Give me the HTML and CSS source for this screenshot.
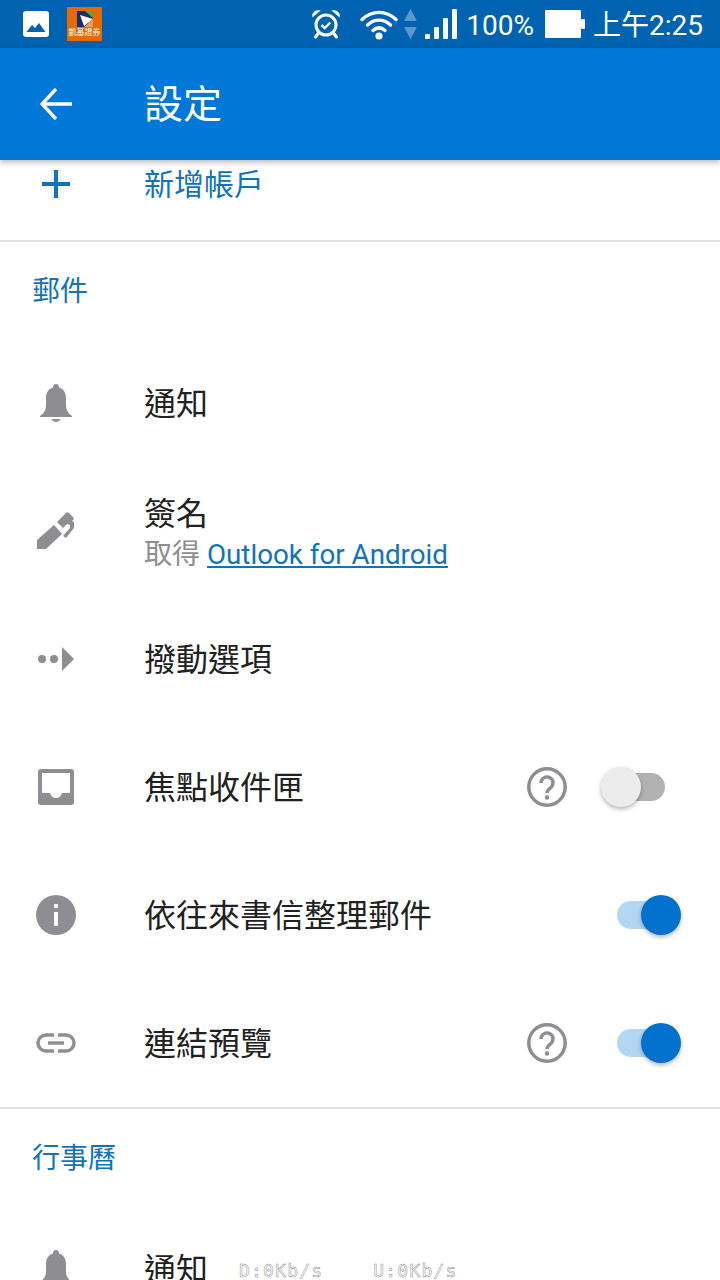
FILE: index.html
```html
<!DOCTYPE html>
<html lang="zh-Hant">
<head>
<meta charset="utf-8">
<title>設定</title>
<link rel="stylesheet" href="styles.css">
</head>
<body>
<div class="screen">
  <header class="statusbar">
    <svg class="st-image" viewBox="0 0 26 26"><rect width="26" height="26" rx="3" fill="#fff"/><path d="M3.500 21l5.500-7 3 3 4-5 6.500 9z" fill="#0063b1"/></svg>
    <div class="st-logo">
      <svg class="st-logo-mark" viewBox="0 0 16 16"><rect width="16" height="16" fill="#1d2c6b"/><path d="M8 0h8v7z" fill="#5aa63c"/><path d="M3 4l13 4-9 7z" fill="#fff"/><path d="M16 8v8H7z" fill="#f0a040"/></svg>
      <span class="st-logo-text">凱基證券</span>
    </div>
    <div class="st-right">
      <svg class="st-alarm" viewBox="0 0 30 30" fill="none" stroke="#fff"><circle cx="15" cy="16" r="10" stroke-width="3"/><path d="M10.500 16l3.200 3 5.500-5.500" stroke-width="2.400"/><path d="M2 7a5 5 0 0 1 6-5zM28 7a5 5 0 0 0-6-5z" fill="#fff" stroke-width="1.500"/><path d="M7.500 24l-3 4M22.500 24l3 4" stroke-width="3" stroke-linecap="round"/></svg>
      <svg class="st-wifi" viewBox="0 0 38 32" fill="none" stroke="#fff" stroke-width="3.400" stroke-linecap="round"><path d="M2 11.500c10-9.500 24-9.500 34 0"/><path d="M7.500 17c7-6.500 16-6.500 23 0"/><path d="M13 22.500c4-3.500 8-3.500 12 0"/><circle cx="19" cy="28" r="3.600" fill="#fff" stroke="none"/></svg>
      <svg class="st-arrows" viewBox="0 0 13 32" fill="#5b96cc"><path d="M6.500 1L13 13H0zM0 19h13L6.500 31z"/></svg>
      <svg class="st-signal" viewBox="0 0 32 30" fill="#fff"><rect x="0" y="25" width="5" height="5" rx="1"/><rect x="9" y="18" width="5" height="12" rx="1"/><rect x="18" y="9" width="5" height="21" rx="1"/><rect x="27" y="0" width="5" height="30" rx="1"/></svg>
      <span class="st-percent">100%</span>
      <svg class="st-battery" viewBox="0 0 40 28" fill="#fff"><rect width="36" height="28" rx="1"/><rect x="36" y="9" width="4" height="10" rx="1"/></svg>
      <span class="st-time">上午2:25</span>
    </div>
  </header>

  <div class="appbar">
    <svg class="appbar-back" viewBox="0 0 32 32" fill="none" stroke="#fff" stroke-width="3.400"><path d="M32 16H3M16 1L2 16l14 15"/></svg>
    <h1 class="appbar-title">設定</h1>
  </div>

  <main class="content">
    <div class="add-row">
      <div class="icon-slot"><svg class="icon-plus" viewBox="0 0 28 28" fill="#1173bb"><rect x="12" y="0" width="4" height="28"/><rect x="0" y="12" width="28" height="4"/></svg></div>
      <span class="add-label">新增帳戶</span>
    </div>
    <div class="divider"></div>

    <div class="section-head section-first">郵件</div>

    <div class="row">
      <div class="icon-slot"><svg class="icon-bell" viewBox="0 0 32 38" fill="#8e8e92"><path d="M16 0c2 0 3 1.500 3 3.500 5 1.500 7 5.500 7 11V22c0 4 2 7 6 10v1H0v-1c4-3 6-6 6-10v-7.500c0-5.500 2-9.500 7-11C13 1.500 14 0 16 0z"/><path d="M11.500 35h9c-.7 2-2.500 3-4.500 3s-3.800-1-4.500-3z"/></svg></div>
      <span class="row-label">通知</span>
    </div>

    <div class="row">
      <div class="icon-slot"><svg class="icon-pen" viewBox="0 0 38 38" fill="#8e8e92"><path d="M0 37V28L17 13l8 9L9 37z"/><path d="M20 10l9-9c1-1 2-1 3 0l4 4c1 1 1 2 0 3l-1 1 2 1v6l-8 10-3-2 7-8v-3l-3-1-4 4z"/></svg></div>
      <div class="row-stack">
        <span class="row-label">簽名</span>
        <span class="row-sub">取得 <a class="row-link">Outlook for Android</a></span>
      </div>
    </div>

    <div class="row">
      <div class="icon-slot"><svg class="icon-swipe" viewBox="0 0 36 24" fill="#8e8e92"><circle cx="4" cy="12" r="4"/><circle cx="16" cy="12" r="4"/><path d="M24 0l12 12-12 12z"/></svg></div>
      <span class="row-label">撥動選項</span>
    </div>

    <div class="row">
      <div class="icon-slot"><svg class="icon-inbox" viewBox="0 0 36 36"><rect width="36" height="36" rx="3" fill="#8e8e92"/><path d="M4 4h28v20h-8c-1 3.500-3 5-6 5s-5-1.500-6-5H4z" fill="#fff"/></svg></div>
      <span class="row-label">焦點收件匣</span>
      <svg class="icon-help" viewBox="0 0 40 40" fill="none" stroke="#8e8e92"><circle cx="20" cy="20" r="18.200" stroke-width="3.500"/><path d="M14 16a6 6 0 1 1 9.500 4.800c-2.300 1.700-3.500 2.700-3.500 5.200" stroke-width="3.400"/><circle cx="20" cy="30.500" r="2.200" fill="#8e8e92" stroke="none"/></svg>
      <span class="switch switch-off"><span class="switch-thumb"></span></span>
    </div>

    <div class="row">
      <div class="icon-slot"><svg class="icon-info" viewBox="0 0 40 40"><circle cx="20" cy="20" r="20" fill="#8e8e92"/><rect x="18" y="9" width="4" height="4" fill="#fff"/><rect x="18" y="17" width="4" height="14" fill="#fff"/></svg></div>
      <span class="row-label">依往來書信整理郵件</span>
      <span class="switch switch-on switch-alone"><span class="switch-thumb"></span></span>
    </div>

    <div class="row">
      <div class="icon-slot"><svg class="icon-link" viewBox="0 0 40 20" fill="none" stroke="#8e8e92" stroke-width="3.400"><path d="M18 2H10a8 8 0 0 0 0 16h8M22 2h8a8 8 0 0 1 0 16h-8"/><path d="M12 10h16"/></svg></div>
      <span class="row-label">連結預覽</span>
      <svg class="icon-help" viewBox="0 0 40 40" fill="none" stroke="#8e8e92"><circle cx="20" cy="20" r="18.200" stroke-width="3.500"/><path d="M14 16a6 6 0 1 1 9.500 4.800c-2.300 1.700-3.500 2.700-3.500 5.200" stroke-width="3.400"/><circle cx="20" cy="30.500" r="2.200" fill="#8e8e92" stroke="none"/></svg>
      <span class="switch switch-on"><span class="switch-thumb"></span></span>
    </div>
    <div class="divider"></div>

    <div class="section-head">行事曆</div>

    <div class="row">
      <div class="icon-slot"><svg class="icon-bell" viewBox="0 0 32 38" fill="#8e8e92"><path d="M16 0c2 0 3 1.500 3 3.500 5 1.500 7 5.500 7 11V22c0 4 2 7 6 10v1H0v-1c4-3 6-6 6-10v-7.500c0-5.500 2-9.500 7-11C13 1.500 14 0 16 0z"/><path d="M11.500 35h9c-.7 2-2.500 3-4.500 3s-3.800-1-4.500-3z"/></svg></div>
      <span class="row-label">通知</span>
    </div>
  </main>

  <div class="netspeed"><span>D:0Kb/s</span><span>U:0Kb/s</span></div>
</div>
</body>
</html>
```

FILE: styles.css
```css
* { box-sizing: border-box; }
html, body { margin: 0; padding: 0; background: #fff; }
body { font-family: Roboto, "Noto Sans CJK TC", sans-serif; }
.screen { position: relative; width: 720px; height: 1280px; overflow: hidden; background: #fff; }

.statusbar { height: 48px; background: #0063b1; display: flex; align-items: center; padding-left: 23px; color: #fff; }
.st-image { width: 26px; height: 26px; }
.st-logo { width: 35px; height: 34px; margin-left: 18px; background: #e66a00; display: flex; flex-direction: column; align-items: center; padding-top: 4px; overflow: hidden; }
.st-logo-mark { width: 16px; height: 16px; }
.st-logo-text { font-size: 8px; line-height: 11px; white-space: nowrap; color: #fff; }
.st-right { margin-left: auto; display: flex; align-items: center; padding-right: 17px; }
.st-alarm { width: 30px; height: 30px; }
.st-wifi { width: 38px; height: 32px; margin-left: 19px; }
.st-arrows { width: 13px; height: 32px; margin-left: 6px; }
.st-signal { width: 32px; height: 30px; margin-left: 8px; }
.st-percent { font-size: 28px; line-height: 48px; margin-left: 9px; padding-top: 3px; }
.st-battery { width: 40px; height: 28px; margin-left: 11px; }
.st-time { font-size: 28px; line-height: 48px; margin-left: 8px; padding-top: 3px; }

.appbar { position: relative; z-index: 2; height: 112px; background: #0078d7; display: flex; align-items: center; padding-left: 40px; box-shadow: 0 2px 6px rgba(0,0,0,.3); }
.appbar-back { width: 32px; height: 32px; }
.appbar-title { margin: 2px 0 0 72px; font-size: 39px; font-weight: 400; color: #fff; line-height: 1; }

.content { display: flex; flex-direction: column; }
.add-row { height: 80px; display: flex; align-items: flex-start; padding-top: 10px; }
.add-label { font-size: 30px; line-height: 28px; color: #1173bb; padding-top: 1px; }
.divider { height: 2px; background: #e1e1e1; flex: none; }
.section-head { height: 96px; padding: 31px 0 0 32px; font-size: 28px; line-height: 38px; color: #1173bb; flex: none; }
.section-first { height: 97px; padding-top: 31px; }
.row { height: 128px; flex: none; display: flex; align-items: center; padding-right: 55px; }
.icon-slot { width: 144px; flex: none; display: flex; align-items: center; }
.icon-slot svg { display: block; }
.icon-plus { width: 28px; height: 28px; margin-left: 42px; }
.icon-bell { width: 32px; height: 38px; margin-left: 40px; }
.icon-pen { width: 38px; height: 38px; margin-left: 37px; }
.icon-swipe { width: 36px; height: 24px; margin-left: 38px; }
.icon-inbox { width: 36px; height: 36px; margin-left: 38px; }
.icon-info { width: 40px; height: 40px; margin-left: 36px; }
.icon-link { width: 40px; height: 20px; margin-left: 36px; }
.row-label { font-size: 32px; line-height: 40px; color: #212121; padding-top: 2px; }
.row-stack { display: flex; flex-direction: column; padding-top: 6px; }
.row-sub { font-size: 28px; line-height: 42px; color: #8e8e92; }
.row-link { color: #1173bb; text-decoration: underline; font-size: 27.750px; }
.icon-help { width: 40px; height: 40px; margin-left: auto; }
.switch { position: relative; width: 48px; height: 28px; border-radius: 14px; margin-left: 50px; flex: none; }
.switch-alone { margin-left: auto; }
.switch-off { background: #b2b2b2; }
.switch-on { background: #b3d6f3; }
.switch-thumb { position: absolute; top: -6px; width: 40px; height: 40px; border-radius: 50%; box-shadow: 0 2px 4px rgba(0,0,0,.3); }
.switch-off .switch-thumb { left: -16px; background: #ececec; }
.switch-on .switch-thumb { right: -16px; background: #0072ce; }

.netspeed { position: absolute; left: 239px; top: 1261px; display: flex; gap: 50px; font-family: "DejaVu Sans Mono", monospace; font-size: 18px; line-height: 19px; color: #fff; letter-spacing: 1.200px; -webkit-text-stroke: .5px #8c8c8c; opacity: .98; }
```
